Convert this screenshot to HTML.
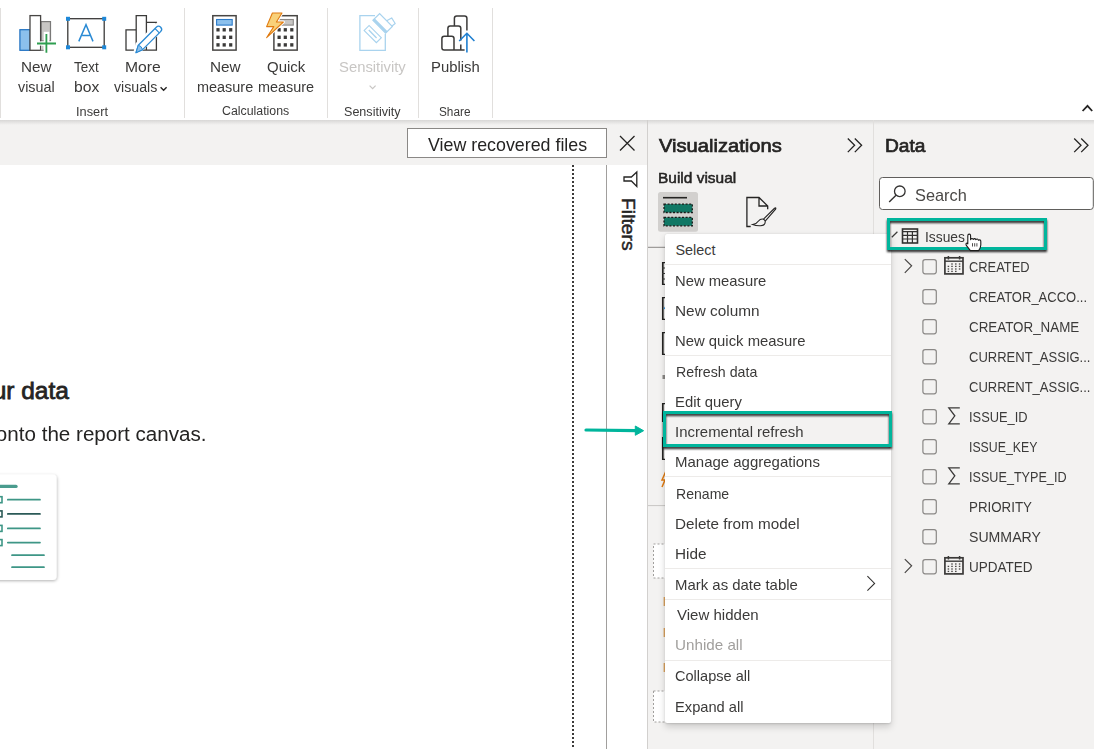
<!DOCTYPE html>
<html><head><meta charset="utf-8">
<style>
*{margin:0;padding:0;box-sizing:border-box}
html,body{width:1094px;height:749px;overflow:hidden;background:#fff;font-family:"Liberation Sans",sans-serif;color:#252423;position:relative}
.a{position:absolute}
.t{position:absolute;white-space:nowrap;line-height:1;transform-origin:0 0}
.sep{position:absolute;width:1px;background:#e1dfdd}
.ms{position:absolute;left:0;width:226px;height:1px;background:#edebe9}
.cb{position:absolute;width:15px;height:15px;border:1px solid #8a8886;border-radius:2px}
</style></head><body>
<div class="sep" style="left:0;top:8px;height:110px"></div>
<div class="sep" style="left:184px;top:8px;height:110px"></div>
<div class="sep" style="left:327px;top:8px;height:110px"></div>
<div class="sep" style="left:418px;top:8px;height:110px"></div>
<div class="sep" style="left:492px;top:8px;height:110px"></div>

<svg class="a" style="left:0;top:0" width="1094" height="120" viewBox="0 0 1094 120">
 <!-- New visual -->
 <rect x="19.9" y="29.7" width="10.2" height="20.6" fill="#8cc0ec" stroke="#1c6fc0" stroke-width="1.2"/>
 <rect x="41" y="21.6" width="9.5" height="19.3" fill="#c8c6c4" stroke="#7a7978" stroke-width="1.2"/>
 <rect x="30" y="15.6" width="10.6" height="34.7" fill="#fff" stroke="#484644" stroke-width="1.3"/>
 <rect x="41.3" y="45.6" width="2.4" height="4.2" fill="#c8c6c4"/>
 <path d="M40.6 50.3 H44" stroke="#7a7978" stroke-width="1.2"/>
 <rect x="43.7" y="31.8" width="5.6" height="22" fill="#fff"/>
 <rect x="35.5" y="41.4" width="21.5" height="4.2" fill="#fff"/>
 <path d="M37 43.5 H56 M46.4 34 V52.7" stroke="#2f9e50" stroke-width="1.8"/>
 <!-- Text box -->
 <rect x="67.8" y="18.7" width="36.4" height="28.6" fill="none" stroke="#3b3a39" stroke-width="1.3"/>
 <rect x="66" y="16.8" width="4" height="4" fill="#1e88d8"/><rect x="102.2" y="16.8" width="4" height="4" fill="#1e88d8"/>
 <rect x="66" y="45.3" width="4" height="4" fill="#1e88d8"/><rect x="102.2" y="45.3" width="4" height="4" fill="#1e88d8"/>
 <path d="M78.8 41.4 L86 24.6 L93 41.4 M82.2 35.5 H89.8" fill="none" stroke="#2a8ad4" stroke-width="1.5"/>
 <!-- More visuals -->
 <path d="M126 50.2 V29.8 H136.2 V50.2 Z M136.2 29.8 V15.7 H146.4 V50.2 M146.4 22.3 H156.4 V50.2 H136.2" fill="none" stroke="#3b3a39" stroke-width="1.3"/>
 <path d="M134.5 54 L137 44 L157 24.5 L162 29.5 L142 49 Z" fill="#fff" stroke="#fff" stroke-width="3"/>
 <path d="M136 52.7 L138.3 45.2 L156.3 27.2 Q158.5 25 160.7 27.2 Q162.8 29.4 160.6 31.6 L142.6 49.6 Z" fill="#fff" stroke="#2a8ad4" stroke-width="1.3" stroke-linejoin="round"/>
 <path d="M136 52.7 L138.3 45.2 Q141.5 45.8 142.6 49.6 Z" fill="#8cc0ec" stroke="#2a8ad4" stroke-width="1"/>
 <path d="M155 28.5 L159.3 32.8" stroke="#2a8ad4" stroke-width="1.1"/>
 <path d="M160.6 87.2 L163.6 90.2 L166.6 87.2" fill="none" stroke="#252423" stroke-width="1.4"/>
 <!-- calculator -->
 <rect x="212.8" y="15.7" width="23.3" height="34.4" fill="#fff" stroke="#484644" stroke-width="1.5"/>
 <rect x="216.6" y="19.5" width="15.6" height="5.6" fill="#8cc0ec" stroke="#2a7ac9" stroke-width="1.1"/>
 <g fill="#3b3a39">
  <rect x="216.4" y="28.1" width="3.2" height="3.4"/><rect x="222.6" y="28.1" width="3.2" height="3.4"/><rect x="229.1" y="28.1" width="3.2" height="3.4"/>
  <rect x="216.4" y="35.6" width="3.2" height="3.4"/><rect x="222.6" y="35.6" width="3.2" height="3.4"/><rect x="229.1" y="35.6" width="3.2" height="3.4"/>
  <rect x="216.4" y="43.2" width="3.2" height="3.4"/><rect x="222.6" y="43.2" width="3.2" height="3.4"/><rect x="229.1" y="43.2" width="3.2" height="3.4"/>
 </g>
 <!-- quick measure -->
 <rect x="273.9" y="15.7" width="23.3" height="34.4" fill="#fff" stroke="#484644" stroke-width="1.5"/>
 <rect x="277.7" y="19.5" width="15.6" height="5.6" fill="#c8c6c4" stroke="#8a8886" stroke-width="1.1"/>
 <g fill="#3b3a39">
  <rect x="277.5" y="28.1" width="3.2" height="3.4"/><rect x="283.7" y="28.1" width="3.2" height="3.4"/><rect x="290.2" y="28.1" width="3.2" height="3.4"/>
  <rect x="277.5" y="35.6" width="3.2" height="3.4"/><rect x="283.7" y="35.6" width="3.2" height="3.4"/><rect x="290.2" y="35.6" width="3.2" height="3.4"/>
  <rect x="277.5" y="43.2" width="3.2" height="3.4"/><rect x="283.7" y="43.2" width="3.2" height="3.4"/><rect x="290.2" y="43.2" width="3.2" height="3.4"/>
 </g>
 <path d="M272.4 13 L282 13 L276.4 22 L283.4 22 L266.6 37.7 L273.8 26.6 L266.6 26.6 Z" fill="#f8d17a" stroke="#fff" stroke-width="3" stroke-linejoin="round"/>
 <path d="M272.4 13 L282 13 L276.4 22 L283.4 22 L266.6 37.7 L273.8 26.6 L266.6 26.6 Z" fill="#f8d17a" stroke="#e07a10" stroke-width="1.1" stroke-linejoin="round"/>
 <!-- sensitivity -->
 <path d="M375 15.7 H359.9 V50.3 H385.3 V33.8" fill="none" stroke="#a9d3ee" stroke-width="1.3"/>
 <g transform="translate(382.8,23.2) rotate(45)">
  <path d="M1 -4.5 L2.5 -10 L9 -8.5 L8.5 -4.5" fill="#fff" stroke="#a9d3ee" stroke-width="1.2" stroke-linejoin="round"/>
  <rect x="-9" y="-4.5" width="18" height="9.5" fill="#fff" stroke="#a9d3ee" stroke-width="1.2"/>
  <rect x="-9" y="2.3" width="18" height="2.7" fill="#a9d3ee"/>
 </g>
 <g transform="translate(372.7,34) rotate(45)">
  <rect x="-8.6" y="-3.5" width="17.3" height="7" fill="#fff" stroke="#a9d3ee" stroke-width="1.1"/>
  <path d="M-5.5 0 H5.5" stroke="#a9d3ee" stroke-width="1.4"/>
 </g>
 <path d="M369.6 85.6 L372.6 88.6 L375.6 85.6" fill="none" stroke="#c8c6c4" stroke-width="1.2"/>
 <!-- publish -->
 <path d="M454 50 V38.5 Q454 36.2 451.7 36.2 H444.2 Q441.9 36.2 441.9 38.5 V47.7 Q441.9 50 444.2 50 H464.6" fill="none" stroke="#3b3a39" stroke-width="1.5"/>
 <path d="M447.9 36.2 V28.2 Q447.9 25.9 450.2 25.9 H458.5 Q460.8 25.9 460.8 28.2 V40.5 M460.8 44.5 V50" fill="none" stroke="#3b3a39" stroke-width="1.5"/>
 <path d="M454.4 25.9 V18.3 Q454.4 16 456.7 16 H464.6 Q466.9 16 466.9 18.3 V30.4" fill="none" stroke="#3b3a39" stroke-width="1.5"/>
 <path d="M466.9 33.6 V52.6 M459.2 41 L466.9 33.3 L474.4 41" fill="none" stroke="#1f7fd0" stroke-width="1.6"/>
 <!-- collapse chevron -->
 <path d="M1082.6 111 L1087.5 105.8 L1092.2 111" fill="none" stroke="#252423" stroke-width="1.8"/>
</svg>
<div class="a" style="left:0;top:120px;width:1094px;height:629px;background:#f3f2f1"></div>
<div class="a" style="left:0;top:120px;width:1094px;height:5px;background:linear-gradient(#d8d7d6,#f3f2f1)"></div>
<div class="a" style="left:407px;top:128px;width:200px;height:30px;border:1px solid #8a8886;background:#fff"></div>
<svg class="a" style="left:619px;top:135px" width="17" height="17" viewBox="0 0 17 17"><path d="M1 1 L15.5 15.5 M15.5 1 L1 15.5" stroke="#252423" stroke-width="1.3"/></svg>
<div class="a" style="left:0;top:165px;width:606px;height:584px;background:#fff"></div>
<div class="a" style="left:572px;top:165px;width:2px;height:584px;background:repeating-linear-gradient(#3b3a39 0 2.2px,transparent 2.2px 4px)"></div>
<div class="a" style="left:606px;top:165px;width:41px;height:584px;background:#fff;border-left:1px solid #a19f9d"></div>
<div class="a" style="left:647px;top:120px;width:1px;height:629px;background:#d2d0ce"></div>
<div class="a" style="left:873px;top:120px;width:1px;height:629px;background:#e1dfdd"></div>
<svg class="a" style="left:0;top:0" width="1094" height="749" viewBox="0 0 1094 749"><path d="M636.8 172 L631.4 177 H624 V181 H631.4 L636.8 186.4 Z" fill="none" stroke="#252423" stroke-width="1.3" stroke-linejoin="miter"/><path d="M847.8 138.5 L854.5999999999999 145.3 L847.8 152.1 M854.8 138.5 L861.5999999999999 145.3 L854.8 152.1" fill="none" stroke="#252423" stroke-width="1.3"/><path d="M1074.2 138.5 L1081.0 145.3 L1074.2 152.1 M1081.2 138.5 L1088.0 145.3 L1081.2 152.1" fill="none" stroke="#252423" stroke-width="1.3"/><rect x="658" y="192" width="40" height="39.7" rx="2.5" fill="#d2d0ce"/><path d="M663 197.7 H687" stroke="#252423" stroke-width="1.6"/><rect x="664" y="204.1" width="28.3" height="8.4" fill="#117865" stroke="#1b1a19" stroke-width="1.3" stroke-dasharray="2 1.6"/><rect x="664" y="217.4" width="28.3" height="8.4" fill="#117865" stroke="#1b1a19" stroke-width="1.3" stroke-dasharray="2 1.6"/><path d="M750.7 226.5 H746.9 V197.5 H759 L767.7 206 V209.2 M759 197.5 V206 H767.7" fill="none" stroke="#252423" stroke-width="1.3"/><path d="M763.5 219.2 L774.5 208.3 Q776.5 207 775.6 209.2 L765.2 221.2" fill="none" stroke="#252423" stroke-width="1.1"/><path d="M765.2 221.2 Q765.5 225.5 760.5 225.8 Q756 226 752.6 224.6 Q756.5 224 758.5 221 Q760.5 218.5 763.5 219.2 Q765 219.8 765.2 221.2 Z" fill="none" stroke="#252423" stroke-width="1.1"/><path d="M648 247.3 H700" stroke="#8a8886" stroke-width="1"/><path d="M662.8 262 V285" stroke="#252423" stroke-width="1.7"/><path d="M662 262.6 H666 M662 284.4 H666" stroke="#252423" stroke-width="1.1"/><path d="M662.8 297 V320" stroke="#252423" stroke-width="1.7"/><path d="M662 297.6 H666 M662 319.4 H666" stroke="#252423" stroke-width="1.1"/><path d="M662.8 332 V355" stroke="#252423" stroke-width="1.7"/><path d="M662 332.6 H666 M662 354.4 H666" stroke="#252423" stroke-width="1.1"/><path d="M662.8 403 V422" stroke="#252423" stroke-width="1.7"/><path d="M662 403.6 H666 M662 421.4 H666" stroke="#252423" stroke-width="1.1"/><path d="M662.8 437 V460" stroke="#252423" stroke-width="1.7"/><path d="M662 437.6 H666 M662 459.4 H666" stroke="#252423" stroke-width="1.1"/><path d="M662 268 H666 M662 273.5 H666 M662 279 H666" stroke="#3b3a39" stroke-width="1"/><path d="M664 309 L666 306" stroke="#2a8ad4" stroke-width="1.2"/><rect x="662.5" y="375" width="2.5" height="4" fill="#8a8886"/><path d="M666 471 L662 480 H665 L662 487" fill="none" stroke="#e07a10" stroke-width="1.5"/><path d="M648 505.6 H700" stroke="#c8c6c4" stroke-width="1"/><rect x="653.5" y="544" width="14" height="34" fill="#fff" stroke="#a19f9d" stroke-width="1" stroke-dasharray="2 2"/><rect x="653.5" y="691" width="14" height="31" fill="#fff" stroke="#a19f9d" stroke-width="1" stroke-dasharray="2 2"/><rect x="663.6" y="597" width="1.4" height="9" fill="#d9a35f"/><rect x="663.6" y="628" width="1.4" height="9" fill="#d9a35f"/><rect x="663.6" y="663" width="1.4" height="9" fill="#d9a35f"/><rect x="879.5" y="177.5" width="213.8" height="32" rx="3" fill="#fff" stroke="#605e5c" stroke-width="1"/><circle cx="899.8" cy="191.3" r="5.3" fill="none" stroke="#323130" stroke-width="1.3"/><path d="M896 195.2 L889.2 202" stroke="#323130" stroke-width="1.4"/><rect x="902.5" y="229" width="15" height="14" fill="none" stroke="#323130" stroke-width="1.6"/><path d="M902.5 231.6 H917.5 M902.5 235.3 H917.5 M902.5 239 H917.5 M907.5 231.6 V243 M912.4 231.6 V243" stroke="#323130" stroke-width="1.2"/><path d="M891.8 237.2 L897.4 231.8" stroke="#3b3a39" stroke-width="1.2"/><rect x="922.9" y="259.6" width="13.4" height="14.2" rx="2.2" fill="none" stroke="#8a8886" stroke-width="1.2"/><rect x="922.9" y="289.6" width="13.4" height="14.2" rx="2.2" fill="none" stroke="#8a8886" stroke-width="1.2"/><rect x="922.9" y="319.6" width="13.4" height="14.2" rx="2.2" fill="none" stroke="#8a8886" stroke-width="1.2"/><rect x="922.9" y="349.6" width="13.4" height="14.2" rx="2.2" fill="none" stroke="#8a8886" stroke-width="1.2"/><rect x="922.9" y="379.6" width="13.4" height="14.2" rx="2.2" fill="none" stroke="#8a8886" stroke-width="1.2"/><rect x="922.9" y="409.6" width="13.4" height="14.2" rx="2.2" fill="none" stroke="#8a8886" stroke-width="1.2"/><rect x="922.9" y="439.6" width="13.4" height="14.2" rx="2.2" fill="none" stroke="#8a8886" stroke-width="1.2"/><rect x="922.9" y="469.6" width="13.4" height="14.2" rx="2.2" fill="none" stroke="#8a8886" stroke-width="1.2"/><rect x="922.9" y="499.6" width="13.4" height="14.2" rx="2.2" fill="none" stroke="#8a8886" stroke-width="1.2"/><rect x="922.9" y="529.6" width="13.4" height="14.2" rx="2.2" fill="none" stroke="#8a8886" stroke-width="1.2"/><rect x="922.9" y="559.6" width="13.4" height="14.2" rx="2.2" fill="none" stroke="#8a8886" stroke-width="1.2"/><path d="M904.8 259.1 L911.6 265.8 L904.8 272.8" fill="none" stroke="#484644" stroke-width="1.2"/><rect x="944.9" y="257.8" width="18.1" height="16.1" fill="none" stroke="#3b3a39" stroke-width="1.7"/><path d="M944.9 261.2 H963 " stroke="#3b3a39" stroke-width="1.4"/><path d="M948.4 256.0 V259.4 M959.6 256.0 V259.4" stroke="#3b3a39" stroke-width="1.5"/><rect x="951.25" y="263.35" width="1.5" height="1.3" fill="#484644"/><rect x="955.05" y="263.35" width="1.5" height="1.3" fill="#484644"/><rect x="958.85" y="263.35" width="1.5" height="1.3" fill="#484644"/><rect x="947.65" y="265.75" width="1.5" height="1.3" fill="#484644"/><rect x="951.25" y="265.75" width="1.5" height="1.3" fill="#484644"/><rect x="955.05" y="265.75" width="1.5" height="1.3" fill="#484644"/><rect x="958.85" y="265.75" width="1.5" height="1.3" fill="#484644"/><rect x="947.65" y="268.35" width="1.5" height="1.3" fill="#484644"/><rect x="951.25" y="268.35" width="1.5" height="1.3" fill="#484644"/><rect x="955.05" y="268.35" width="1.5" height="1.3" fill="#484644"/><rect x="958.85" y="268.35" width="1.5" height="1.3" fill="#484644"/><rect x="947.65" y="270.75" width="1.5" height="1.3" fill="#484644"/><rect x="951.25" y="270.75" width="1.5" height="1.3" fill="#484644"/><rect x="955.05" y="270.75" width="1.5" height="1.3" fill="#484644"/><path d="M904.8 559.1 L911.6 565.8 L904.8 572.8" fill="none" stroke="#484644" stroke-width="1.2"/><rect x="944.9" y="557.8" width="18.1" height="16.1" fill="none" stroke="#3b3a39" stroke-width="1.7"/><path d="M944.9 561.2 H963 " stroke="#3b3a39" stroke-width="1.4"/><path d="M948.4 556.0 V559.4 M959.6 556.0 V559.4" stroke="#3b3a39" stroke-width="1.5"/><rect x="951.25" y="563.35" width="1.5" height="1.3" fill="#484644"/><rect x="955.05" y="563.35" width="1.5" height="1.3" fill="#484644"/><rect x="958.85" y="563.35" width="1.5" height="1.3" fill="#484644"/><rect x="947.65" y="565.75" width="1.5" height="1.3" fill="#484644"/><rect x="951.25" y="565.75" width="1.5" height="1.3" fill="#484644"/><rect x="955.05" y="565.75" width="1.5" height="1.3" fill="#484644"/><rect x="958.85" y="565.75" width="1.5" height="1.3" fill="#484644"/><rect x="947.65" y="568.35" width="1.5" height="1.3" fill="#484644"/><rect x="951.25" y="568.35" width="1.5" height="1.3" fill="#484644"/><rect x="955.05" y="568.35" width="1.5" height="1.3" fill="#484644"/><rect x="958.85" y="568.35" width="1.5" height="1.3" fill="#484644"/><rect x="947.65" y="570.75" width="1.5" height="1.3" fill="#484644"/><rect x="951.25" y="570.75" width="1.5" height="1.3" fill="#484644"/><rect x="955.05" y="570.75" width="1.5" height="1.3" fill="#484644"/><path d="M959.8 407.8 H948.8 L954.8 415.8 L948.8 423.8 H959.8" fill="none" stroke="#3b3a39" stroke-width="1.3"/><path d="M959.8 467.8 H948.8 L954.8 475.8 L948.8 483.8 H959.8" fill="none" stroke="#3b3a39" stroke-width="1.3"/><defs><filter id="cs" x="-20%" y="-20%" width="140%" height="140%"><feDropShadow dx="0.5" dy="1" stdDeviation="1.8" flood-color="#000" flood-opacity="0.3"/></filter></defs><rect x="-10" y="474.5" width="66.5" height="105.5" rx="4" fill="#fff" filter="url(#cs)"/><path d="M-2 486.4 H16" stroke="#4a9c8e" stroke-width="3.4" stroke-linecap="round"/><path d="M7.8 499.7 H40" stroke="#3e9686" stroke-width="1.7" stroke-linecap="round"/><rect x="-4" y="496.7" width="6" height="6" fill="none" stroke="#3e9686" stroke-width="1.6"/><path d="M7.8 513.9 H40" stroke="#2b5a57" stroke-width="1.7" stroke-linecap="round"/><rect x="-4" y="510.9" width="6" height="6" fill="none" stroke="#2b5a57" stroke-width="1.6"/><path d="M7.8 528.4 H40" stroke="#3e9686" stroke-width="1.7" stroke-linecap="round"/><rect x="-4" y="525.4" width="6" height="6" fill="none" stroke="#3e9686" stroke-width="1.6"/><path d="M7.8 542.6 H40" stroke="#3e9686" stroke-width="1.7" stroke-linecap="round"/><rect x="-4" y="539.6" width="6" height="6" fill="none" stroke="#3e9686" stroke-width="1.6"/><path d="M12 555.2 H44" stroke="#3e9686" stroke-width="1.7" stroke-linecap="round"/><path d="M12 567.2 H44" stroke="#3e9686" stroke-width="1.7" stroke-linecap="round"/></svg>
<div class="t" style="left:638.45px;top:198.49px;font-size:19.2px;-webkit-text-stroke:0.45px #252423;color:#252423;transform:rotate(90deg) scaleX(1.0098)">Filters</div>
<div class="t" style="left:20.86px;top:60.27px;font-size:14.68px;color:#3b3a39;transform:scaleX(1.0393);">New</div>
<div class="t" style="left:18.00px;top:79.97px;font-size:14.68px;color:#3b3a39;transform:scaleX(0.9757);">visual</div>
<div class="t" style="left:74.00px;top:60.27px;font-size:14.68px;color:#3b3a39;transform:scaleX(0.9148);">Text</div>
<div class="t" style="left:73.63px;top:79.97px;font-size:14.68px;color:#3b3a39;transform:scaleX(1.0682);">box</div>
<div class="t" style="left:124.53px;top:60.27px;font-size:14.68px;color:#3b3a39;transform:scaleX(1.0688);">More</div>
<div class="t" style="left:113.70px;top:79.97px;font-size:14.68px;color:#3b3a39;transform:scaleX(0.9659);">visuals</div>
<div class="t" style="left:209.66px;top:60.27px;font-size:14.68px;color:#3b3a39;transform:scaleX(1.0429);">New</div>
<div class="t" style="left:196.92px;top:79.97px;font-size:14.68px;color:#3b3a39;transform:scaleX(0.9839);">measure</div>
<div class="t" style="left:266.78px;top:60.27px;font-size:14.68px;color:#3b3a39;transform:scaleX(1.0194);">Quick</div>
<div class="t" style="left:257.92px;top:79.97px;font-size:14.68px;color:#3b3a39;transform:scaleX(0.9821);">measure</div>
<div class="t" style="left:339.09px;top:60.17px;font-size:14.68px;color:#c8c6c4;transform:scaleX(1.0108);">Sensitivity</div>
<div class="t" style="left:431.29px;top:60.17px;font-size:14.68px;color:#3b3a39;transform:scaleX(1.0130);">Publish</div>
<div class="t" style="left:76.24px;top:106.18px;font-size:12.07px;color:#3b3a39;transform:scaleX(1.0586);">Insert</div>
<div class="t" style="left:221.98px;top:105.08px;font-size:12.07px;color:#3b3a39;transform:scaleX(1.0234);">Calculations</div>
<div class="t" style="left:344.46px;top:105.78px;font-size:12.07px;color:#3b3a39;transform:scaleX(1.0415);">Sensitivity</div>
<div class="t" style="left:439.32px;top:105.78px;font-size:12.07px;color:#3b3a39;transform:scaleX(0.9774);">Share</div>
<div class="t" style="left:428.00px;top:137.02px;font-size:17.7px;color:#252423;transform:scaleX(1.0076);">View recovered files</div>
<div class="t" style="left:-226.60px;top:378.86px;font-size:24.5px;-webkit-text-stroke:0.8px #252423;color:#252423;">Build visuals with your data</div>
<div class="t" style="left:-373.86px;top:423.97px;font-size:20px;color:#252423;transform:scaleX(1.0300);">Select or drag fields from the Data pane onto the report canvas.</div>
<div class="t" style="left:658.80px;top:135.76px;font-size:19.07px;-webkit-text-stroke:0.7px #252423;color:#252423;transform:scaleX(1.0569);">Visualizations</div>
<div class="t" style="left:884.50px;top:135.56px;font-size:19.07px;-webkit-text-stroke:0.7px #252423;color:#252423;transform:scaleX(1.0050);">Data</div>
<div class="t" style="left:657.73px;top:170.61px;font-size:14.4px;-webkit-text-stroke:0.5px #252423;color:#252423;transform:scaleX(1.0746);">Build visual</div>
<div class="t" style="left:914.86px;top:187.25px;font-size:17.42px;color:#4a4846;transform:scaleX(0.9377);">Search</div>
<div class="t" style="left:925.07px;top:229.86px;font-size:14.81px;color:#3b3a39;transform:scaleX(0.9341);">Issues</div>
<div class="t" style="left:968.93px;top:260.06px;font-size:14.81px;color:#3b3a39;transform:scaleX(0.8691);">CREATED</div>
<div class="t" style="left:968.92px;top:290.06px;font-size:14.81px;color:#3b3a39;transform:scaleX(0.8788);">CREATOR_ACCO...</div>
<div class="t" style="left:968.90px;top:320.06px;font-size:14.81px;color:#3b3a39;transform:scaleX(0.9042);">CREATOR_NAME</div>
<div class="t" style="left:968.72px;top:350.06px;font-size:14.81px;color:#3b3a39;transform:scaleX(0.8794);">CURRENT_ASSIG...</div>
<div class="t" style="left:968.72px;top:380.06px;font-size:14.81px;color:#3b3a39;transform:scaleX(0.8794);">CURRENT_ASSIG...</div>
<div class="t" style="left:968.73px;top:410.06px;font-size:14.81px;color:#3b3a39;transform:scaleX(0.8682);">ISSUE_ID</div>
<div class="t" style="left:968.77px;top:440.06px;font-size:14.81px;color:#3b3a39;transform:scaleX(0.8309);">ISSUE_KEY</div>
<div class="t" style="left:968.75px;top:470.06px;font-size:14.81px;color:#3b3a39;transform:scaleX(0.8531);">ISSUE_TYPE_ID</div>
<div class="t" style="left:968.70px;top:500.06px;font-size:14.81px;color:#3b3a39;transform:scaleX(0.9000);">PRIORITY</div>
<div class="t" style="left:968.65px;top:530.06px;font-size:14.81px;color:#3b3a39;transform:scaleX(0.9541);">SUMMARY</div>
<div class="t" style="left:968.69px;top:560.06px;font-size:14.81px;color:#3b3a39;transform:scaleX(0.9132);">UPDATED</div>
<div class="a" style="left:665px;top:233.5px;width:226px;height:489.5px;background:#fff;border-radius:2px;box-shadow:0 3.2px 7.2px rgba(0,0,0,.16),0 0.6px 1.8px rgba(0,0,0,.12)"></div><div class="a" style="left:665px;top:416px;width:226px;height:30px;background:#f3f2f1"></div><div class="a" style="left:665px;top:264px;width:226px;height:1px;background:#edebe9"></div><div class="a" style="left:665px;top:355px;width:226px;height:1px;background:#edebe9"></div><div class="a" style="left:665px;top:476px;width:226px;height:1px;background:#edebe9"></div><div class="a" style="left:665px;top:568px;width:226px;height:1px;background:#edebe9"></div><div class="a" style="left:665px;top:599px;width:226px;height:1px;background:#edebe9"></div><div class="a" style="left:665px;top:660px;width:226px;height:1px;background:#edebe9"></div><svg class="a" style="left:860px;top:570px" width="20" height="26" viewBox="860 570 20 26"><path d="M867.4 576.2 L874.6 583.4 L867.4 590.6" fill="none" stroke="#323130" stroke-width="1.1"/></svg>
<div class="t" style="left:675.50px;top:243.01px;font-size:14.4px;color:#3b3a39;">Select</div>
<div class="t" style="left:675.47px;top:273.71px;font-size:14.4px;color:#3b3a39;transform:scaleX(1.0287);">New measure</div>
<div class="t" style="left:675.43px;top:303.81px;font-size:14.4px;color:#3b3a39;transform:scaleX(1.0688);">New column</div>
<div class="t" style="left:675.47px;top:333.61px;font-size:14.4px;color:#3b3a39;transform:scaleX(1.0320);">New quick measure</div>
<div class="t" style="left:675.51px;top:364.71px;font-size:14.4px;color:#3b3a39;transform:scaleX(0.9866);">Refresh data</div>
<div class="t" style="left:675.47px;top:394.71px;font-size:14.4px;color:#3b3a39;transform:scaleX(1.0312);">Edit query</div>
<div class="t" style="left:675.46px;top:424.81px;font-size:14.4px;color:#3b3a39;transform:scaleX(1.0369);">Incremental refresh</div>
<div class="t" style="left:675.46px;top:454.61px;font-size:14.4px;color:#3b3a39;transform:scaleX(1.0406);">Manage aggregations</div>
<div class="t" style="left:675.52px;top:486.81px;font-size:14.4px;color:#3b3a39;transform:scaleX(0.9774);">Rename</div>
<div class="t" style="left:675.44px;top:516.81px;font-size:14.4px;color:#3b3a39;transform:scaleX(1.0595);">Delete from model</div>
<div class="t" style="left:675.44px;top:547.01px;font-size:14.4px;color:#3b3a39;transform:scaleX(1.0643);">Hide</div>
<div class="t" style="left:675.46px;top:577.61px;font-size:14.4px;color:#3b3a39;transform:scaleX(1.0376);">Mark as date table</div>
<div class="t" style="left:676.50px;top:608.41px;font-size:14.4px;color:#3b3a39;transform:scaleX(1.0442);">View hidden</div>
<div class="t" style="left:675.44px;top:638.41px;font-size:14.4px;color:#a19f9d;transform:scaleX(1.0565);">Unhide all</div>
<div class="t" style="left:675.49px;top:669.41px;font-size:14.4px;color:#3b3a39;transform:scaleX(1.0110);">Collapse all</div>
<div class="t" style="left:675.48px;top:699.71px;font-size:14.4px;color:#3b3a39;transform:scaleX(1.0200);">Expand all</div>
<div class="a" style="left:663px;top:411px;width:229px;height:36px;border:3.4px solid #00b59c;filter:drop-shadow(0 2.2px 1px rgba(0,0,0,.85))"></div><div class="a" style="left:887px;top:218px;width:160px;height:32px;border:3.4px solid #00b59c;filter:drop-shadow(0 2.2px 1px rgba(0,0,0,.85))"></div><svg class="a" style="left:0;top:0" width="1094" height="749" viewBox="0 0 1094 749"><path d="M586 430 L636 430.6" stroke="#00b59c" stroke-width="3.2" stroke-linecap="round"/><path d="M635.3 426 L643.6 430.7 L635.3 435.3 Z" fill="#00b59c" stroke="#00b59c" stroke-width="1" stroke-linejoin="round"/><path d="M967.8 242.6 V235.7 Q967.8 234.1 969.2 234.1 Q970.6 234.1 970.6 235.7 V239.6 Q971.9 237.6 973.3 239.4 Q974.6 237.7 975.9 239.6 Q977.3 238.2 978.5 240.2 Q980.8 239.2 980.8 241.6 V245 Q980.7 248 978.6 250.6 H970.4 L966.3 245.4 Q965.4 243.3 967 243 L967.8 243.8 Z" fill="#fff" stroke="#1b1a19" stroke-width="1.1" stroke-linejoin="round"/><path d="M972.5 243.2 V246.5 M974.7 243.2 V246.5 M976.9 243.2 V246.5" stroke="#3b3a39" stroke-width="0.9"/></svg>
</body></html>
